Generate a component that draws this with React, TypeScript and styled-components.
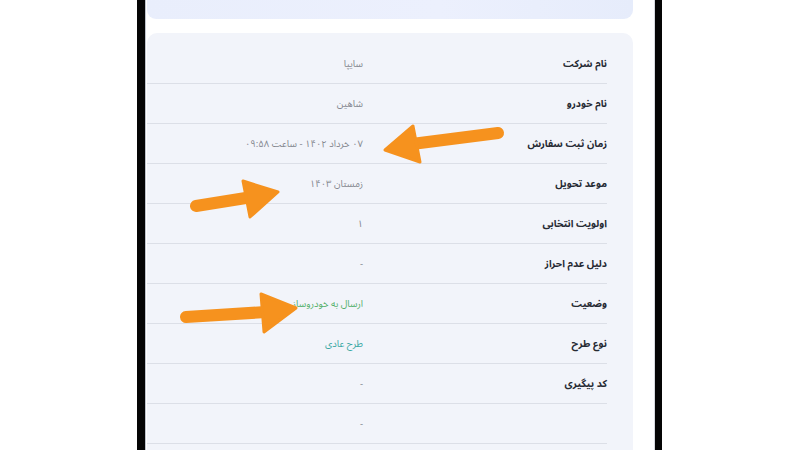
import styled, { createGlobalStyle } from "styled-components";

const GlobalStyle = createGlobalStyle`
    html, body {
        margin: 0;
        padding: 0;
        background: #ffffff;
    }
    body {
        font-family: "Noto Sans Arabic", "DejaVu Sans", sans-serif;
    }
`;

const Page = styled.div`
    position: relative;
    width: 800px;
    height: 450px;
    overflow: hidden;
    background: #ffffff;
`;

const Phone = styled.div`
    margin-left: 137px;
    width: 525px;
    height: 450px;
    border-left: 8px solid #050505;
    border-right: 7px solid #050505;
    background: #ffffff;
    box-shadow: inset 1px 0 0 #bfc3cc, inset -1px 0 0 #d6d9df;
    padding: 0 22px 0 2px;
    box-sizing: border-box;
    display: flex;
    flex-direction: column;
    gap: 14px;
    overflow: hidden;
`;

const TopBox = styled.div`
    height: 19px;
    flex-shrink: 0;
    border-radius: 0 0 9px 9px;
    background: linear-gradient(90deg, #e9eefc 0%, #ecf0fd 60%, #e6ecfb 100%);
`;

const Card = styled.div`
    direction: rtl;
    background: #f2f4fa;
    border-radius: 10px;
    padding: 11px 26px 0 0;
    display: flex;
    flex-direction: column;
`;

const Row = styled.div`
    height: 39px;
    border-bottom: 1px solid #dcdfe7;
    display: flex;
    align-items: center;
    flex-shrink: 0;
`;

const Label = styled.div`
    width: 244px;
    flex-shrink: 0;
    font-size: 10px;
    font-weight: 700;
    color: #262a33;
`;

const Value = styled.div<{ $tone?: "green" | "teal" }>`
    font-size: 9.5px;
    color: ${(p) => (p.$tone === "green" ? "#52b06a" : p.$tone === "teal" ? "#3aa8a4" : "#84878f")};
`;

const Overlay = styled.svg`
    position: absolute;
    left: 0;
    top: 0;
    pointer-events: none;
`;

const rows: { label: string; value: string; tone?: "green" | "teal" }[] = [
    { label: "نام شرکت", value: "سایپا" },
    { label: "نام خودرو", value: "شاهین" },
    { label: "زمان ثبت سفارش", value: "۰۷ خرداد ۱۴۰۲ - ساعت ۰۹:۵۸" },
    { label: "موعد تحویل", value: "زمستان ۱۴۰۳" },
    { label: "اولویت انتخابی", value: "۱" },
    { label: "دلیل عدم احراز", value: "-" },
    { label: "وضعیت", value: "ارسال به خودروساز", tone: "green" },
    { label: "نوع طرح", value: "طرح عادی", tone: "teal" },
    { label: "کد پیگیری", value: "-" },
    { label: "", value: "-" },
    { label: "", value: "" },
];

const ORANGE = "#f6921e";

function Arrow({ tail, neck, tip, a, b }: { tail: [number, number]; neck: [number, number]; tip: [number, number]; a: [number, number]; b: [number, number] }) {
    return (
        <g fill={ORANGE} stroke={ORANGE}>
            <line x1={tail[0]} y1={tail[1]} x2={neck[0]} y2={neck[1]} strokeWidth={12} strokeLinecap="round" />
            <polygon points={`${tip[0]},${tip[1]} ${a[0]},${a[1]} ${b[0]},${b[1]}`} strokeWidth={3} strokeLinejoin="round" />
        </g>
    );
}

function App() {
    return (
        <Page>
            <GlobalStyle />
            <Phone>
                <TopBox />
                <Card>
                    {rows.map((r, i) => (
                        <Row key={i}>
                            <Label>{r.label}</Label>
                            <Value $tone={r.tone}>{r.value}</Value>
                        </Row>
                    ))}
                </Card>
            </Phone>
            <Overlay width={800} height={450} viewBox="0 0 800 450">
                <Arrow tail={[498, 133]} neck={[412, 144]} tip={[385, 150]} a={[413, 126]} b={[420, 162]} />
                <Arrow tail={[196, 206]} neck={[252, 197]} tip={[278, 192]} a={[243, 181]} b={[250, 217]} />
                <Arrow tail={[186, 317]} neck={[266, 312]} tip={[296, 308]} a={[261, 294]} b={[264, 332]} />
            </Overlay>
        </Page>
    );
}

export default App;
